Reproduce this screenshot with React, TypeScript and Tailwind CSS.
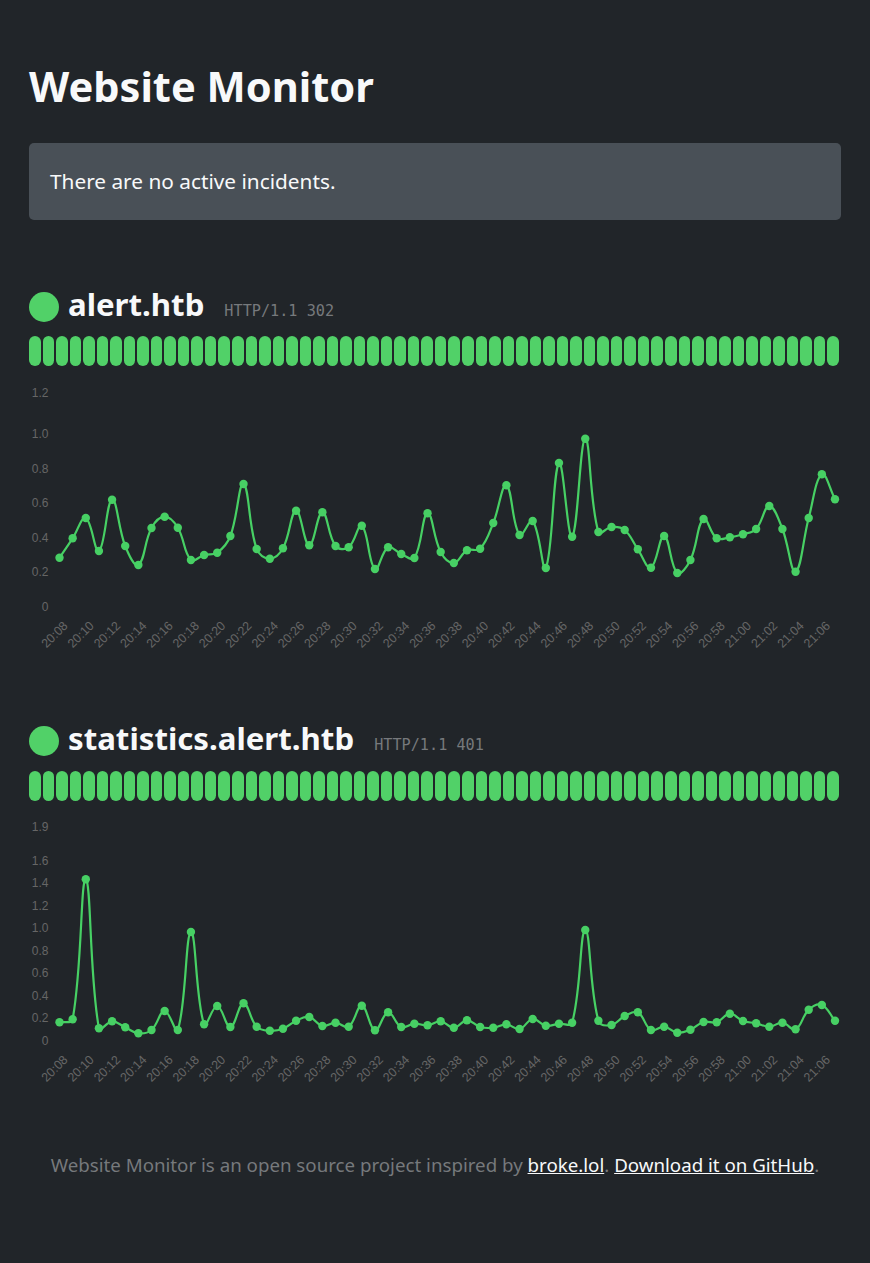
const FIRST_X = 30.5
const STEP_X = 13.144
const SANS = "font-['Noto_Sans',sans-serif]"

const MONITORS = [
  {
    name: 'alert.htb',
    status: 'HTTP/1.1 302',
    lift: 0,
    ticks: [
      ['1.2', 13], ['1.0', 54], ['0.8', 89], ['0.6', 123],
      ['0.4', 158], ['0.2', 192], ['0', 227],
    ] as [string, number][],
    points: [
      177.7, 158.3, 138, 171, 119.7, 166, 185, 148, 136.7, 147.7,
      180, 175, 172.7, 156, 104, 169, 178.7, 168.3, 130.7, 165.3,
      132.3, 166, 167.3, 145.7, 189, 167.3, 174, 178, 133.3, 172,
      183, 170.3, 168.7, 143, 105.3, 155, 141, 188, 83, 156.7,
      58.7, 152, 147, 150, 169.3, 187.7, 156, 193, 180, 139,
      158.3, 157.3, 154.3, 149, 126, 149, 191.7, 138, 94.3, 119.3,
    ],
  },
  {
    name: 'statistics.alert.htb',
    status: 'HTTP/1.1 401',
    lift: 1,
    ticks: [
      ['1.9', 12], ['1.6', 46], ['1.4', 68], ['1.2', 91], ['1.0', 113],
      ['0.8', 136], ['0.6', 158], ['0.4', 181], ['0.2', 203], ['0', 226],
    ] as [string, number][],
    points: [
      207.3, 204.3, 64.3, 213.3, 206.3, 212.3, 218.3, 215, 196, 215,
      117, 209.3, 191, 212, 188.3, 211.7, 215.7, 213.7, 205.7, 202,
      211, 207.7, 211.7, 190.7, 215.3, 197.3, 212, 208.7, 210.3, 206.3,
      212.7, 205.3, 212, 212.7, 209.3, 214, 204, 210.7, 208.7, 207.7,
      115, 205.7, 210, 201, 197.3, 215, 211.7, 217.7, 214.7, 207,
      207.3, 198.7, 206, 208.3, 211.7, 207.7, 214.3, 194.7, 190, 205.7,
    ],
  },
]

function timeLabel(i: number) {
  const total = 20 * 60 + 8 + i
  const mins = String(total % 60).padStart(2, '0')
  return `${Math.floor(total / 60)}:${mins}`
}

// same bezier smoothing chart.js does with tension 0.4
function smoothPath(pts: { x: number; y: number }[]) {
  const controls = pts.map((cur, i) => {
    const prev = pts[i - 1] ?? cur
    const next = pts[i + 1] ?? cur
    const d01 = Math.hypot(cur.x - prev.x, cur.y - prev.y)
    const d12 = Math.hypot(next.x - cur.x, next.y - cur.y)
    const s01 = d01 / (d01 + d12)
    const s12 = d12 / (d01 + d12)
    const dx = next.x - prev.x
    const dy = next.y - prev.y
    return {
      inX: cur.x - 0.4 * s01 * dx,
      inY: cur.y - 0.4 * s01 * dy,
      outX: cur.x + 0.4 * s12 * dx,
      outY: cur.y + 0.4 * s12 * dy,
    }
  })
  let d = `M${pts[0].x} ${pts[0].y}`
  for (let i = 1; i < pts.length; i++) {
    const a = controls[i - 1]
    const b = controls[i]
    d += ` C${a.outX} ${a.outY} ${b.inX} ${b.inY} ${pts[i].x} ${pts[i].y}`
  }
  return d
}

function ResponseChart({ points, ticks, lift }: { points: number[]; ticks: [string, number][]; lift: number }) {
  const pts = points.map((y, i) => ({ x: FIRST_X + i * STEP_X, y: y + lift }))

  return (
    <svg viewBox="0 0 812 280" className="mt-[14px] block h-[280px] w-full">
      <g fill="#666666" fontSize="12" fontFamily="'Liberation Sans', sans-serif">
        {ticks.map(([label, y]) => (
          <text key={label} x="19.5" y={y + lift + 4} textAnchor="end">{label}</text>
        ))}
        {pts.map((p, i) =>
          i % 2 === 0 ? (
            <text
              key={i}
              fontSize="12.5"
              textAnchor="end"
              transform={`translate(${p.x + 9} 246.5) rotate(-45)`}
            >
              {timeLabel(i)}
            </text>
          ) : null,
        )}
      </g>
      <path d={smoothPath(pts)} fill="none" stroke="#47d064" strokeWidth="2.2" />
      {pts.map((p, i) => (
        <circle key={i} cx={p.x} cy={p.y} r="4.2" fill="#47d064" />
      ))}
    </svg>
  )
}

function MonitorSection({ monitor }: { monitor: (typeof MONITORS)[number] }) {
  return (
    <section className="mb-[66px]">
      <div className="flex h-[30px] items-center">
        <span className="h-[30px] w-[30px] shrink-0 rounded-full bg-[#51d168]" />
        <h2 className="mb-[6px] ml-[9px] text-[31.2px] leading-[30px] font-bold text-[#f8f9fa]">{monitor.name}</h2>
        <span className="mt-[9px] ml-[20px] font-['DejaVu_Sans_Mono',monospace] text-[15.2px] text-[#76797c]">
          {monitor.status}
        </span>
      </div>
      <div className={`flex ${monitor.lift ? 'mt-[15px] mb-[-1px]' : 'mt-[14px]'}`}>
        {Array.from({ length: 60 }, (_, i) => (
          <div key={i} className="mr-[2px] h-[30px] flex-1 rounded-[6px] bg-[#51d168]" />
        ))}
      </div>
      <ResponseChart points={monitor.points} ticks={monitor.ticks} lift={monitor.lift} />
    </section>
  )
}

export default function App() {
  return (
    <div className={`${SANS} min-h-[1263px] bg-[#212529] px-[29px] pt-[62px] text-[#f8f9fa]`}>
      <h1 className="text-[41.6px] leading-[48px] font-bold">Website Monitor</h1>
      <div className="mt-[33px] mb-[72px] rounded-[5px] bg-[#495057] px-[21px] py-[23px] text-[20.8px] leading-[31px]">
        There are no active incidents.
      </div>
      {MONITORS.map((m) => (
        <MonitorSection key={m.name} monitor={m} />
      ))}
      <footer className="mt-[-10px] text-center text-[18.72px] leading-[29px] text-[#76797c]">
        Website Monitor is an open source project inspired by{' '}
        <a href="#" className="text-[#f8f9fa] underline">broke.lol</a>.{' '}
        <a href="#" className="text-[#f8f9fa] underline">Download it on GitHub</a>.
      </footer>
    </div>
  )
}
